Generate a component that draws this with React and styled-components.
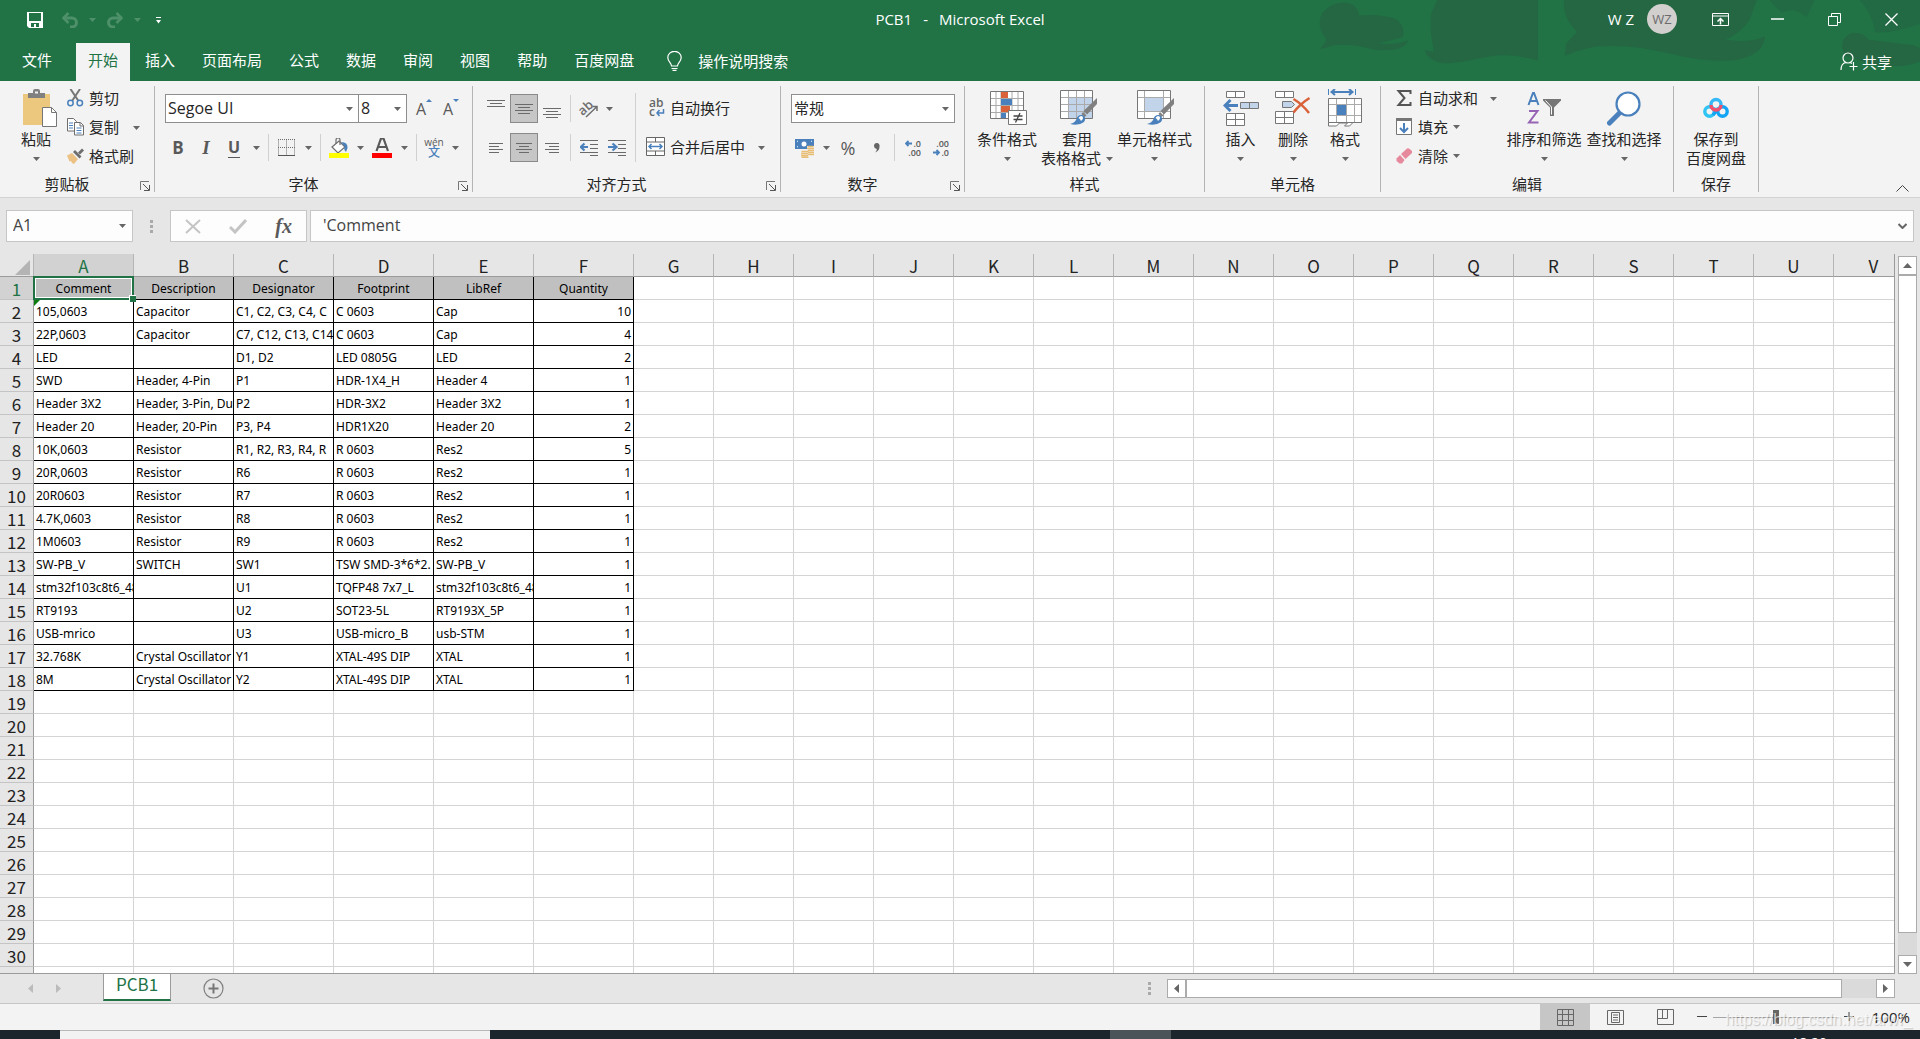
import React from "react";
import styled, { createGlobalStyle, css } from "styled-components";

const GlobalStyle = createGlobalStyle`
  * {
    box-sizing: border-box;
  }

  html,
  body,
  #root {
    height: 100%;
  }

  body {
    margin: 0;
    overflow: hidden;
    font-family: "Open Sans", "Noto Sans CJK SC", sans-serif;
    font-size: 15px;
    color: #262626;
    background: #e6e6e6;
  }

  button,
  input,
  select {
    font: inherit;
    color: inherit;
  }

  button {
    padding: 0;
    border: none;
    background: none;
  }

  svg {
    display: block;
    flex: none;
  }
`;

/* ---------- data ---------- */

const TABS = ["文件", "开始", "插入", "页面布局", "公式", "数据", "审阅", "视图", "帮助", "百度网盘"];

const HEADERS = ["Comment", "Description", "Designator", "Footprint", "LibRef", "Quantity"];

const PARTS = [
  ["105,0603", "Capacitor", "C1, C2, C3, C4, C", "C 0603", "Cap", 10],
  ["22P,0603", "Capacitor", "C7, C12, C13, C14", "C 0603", "Cap", 4],
  ["LED", "", "D1, D2", "LED 0805G", "LED", 2],
  ["SWD", "Header, 4-Pin", "P1", "HDR-1X4_H", "Header 4", 1],
  ["Header 3X2", "Header, 3-Pin, Dual row", "P2", "HDR-3X2", "Header 3X2", 1],
  ["Header 20", "Header, 20-Pin", "P3, P4", "HDR1X20", "Header 20", 2],
  ["10K,0603", "Resistor", "R1, R2, R3, R4, R", "R 0603", "Res2", 5],
  ["20R,0603", "Resistor", "R6", "R 0603", "Res2", 1],
  ["20R0603", "Resistor", "R7", "R 0603", "Res2", 1],
  ["4.7K,0603", "Resistor", "R8", "R 0603", "Res2", 1],
  ["1M0603", "Resistor", "R9", "R 0603", "Res2", 1],
  ["SW-PB_V", "SWITCH", "SW1", "TSW SMD-3*6*2.", "SW-PB_V", 1],
  ["stm32f103c8t6_48", "", "U1", "TQFP48 7x7_L", "stm32f103c8t6_48", 1],
  ["RT9193", "", "U2", "SOT23-5L", "RT9193X_5P", 1],
  ["USB-mrico", "", "U3", "USB-micro_B", "usb-STM", 1],
  ["32.768K", "Crystal Oscillator", "Y1", "XTAL-49S DIP", "XTAL", 1],
  ["8M", "Crystal Oscillator", "Y2", "XTAL-49S DIP", "XTAL", 1],
];

const COLUMNS = "ABCDEFGHIJKLMNOPQRSTUV".split("");
const ROW_COUNT = 31;

/* ---------- icons ---------- */

const Svg = ({ w, h, children }) => (
  <svg width={w} height={h} viewBox={`0 0 ${w} ${h}`} fill="none" aria-hidden="true">
    {children}
  </svg>
);

const Arrow = ({ color = "#666" }) => (
  <Svg w={7} h={4}>
    <path d="M0 0h7L3.5 4z" fill={color} />
  </Svg>
);

const SaveIcon = () => (
  <Svg w={16} h={16}>
    <path d="M0 0h16v16H2l-2-2z" fill="#fff" />
    <path d="M2 1h12v8H2zM4 11h8v4H9v-3H7v3H4z" fill="#217346" />
  </Svg>
);

const UndoIcon = ({ flip }) => (
  <Svg w={18} h={16}>
    <g transform={flip ? "translate(18 0) scale(-1 1)" : undefined} stroke="#4d9069" strokeWidth="3">
      <path d="M2 6h9a4.500 4.500 0 0 1 0 9h-2" />
      <path d="M7.500 1L2.500 6l5 5" strokeWidth="2.500" />
    </g>
  </Svg>
);

const CustomizeIcon = () => (
  <Svg w={5} h={7}>
    <path d="M0 0h5v1H0zM0 3h5L2.500 6.500z" fill="#fff" />
  </Svg>
);

const RibbonModeIcon = () => (
  <Svg w={17} h={13}>
    <path d="M.5.500h16v12H.5zM.5 3h16" stroke="#fff" />
    <path d="M8.500 11.500V5.500M5.500 8.500l3-3 3 3" stroke="#fff" strokeWidth="1.500" />
  </Svg>
);

const BulbIcon = () => (
  <Svg w={15} h={20}>
    <path d="M4.500 15c0-3-3.700-4.500-3.700-8.500a6.500 6 0 0 1 13.400 0c0 4-3.700 5.500-3.700 8.500zM4.500 17.500h6M5.500 19.400h4" stroke="#fff" strokeWidth="1.200" />
  </Svg>
);

const ShareIcon = () => (
  <Svg w={18} h={19}>
    <circle cx="8" cy="6" r="5" stroke="#fff" strokeWidth="1.200" />
    <path d="M1 18c0-4.500 2-7 5-7.500M10 10.500l2 1M13.500 10v8.500M9.500 14.500h8" stroke="#fff" strokeWidth="1.200" />
  </Svg>
);

const PasteIcon = () => (
  <Svg w={43} h={39}>
    <g transform="translate(8 0)">
      <path d="M0 5h27v31H0z" fill="#ecc77e" />
      <path d="M5 4h5V2q0-2 2-2h3q2 0 2 2v2h5v5H5z" fill="#808080" />
      <path d="M12 2.500h3v2h-3z" fill="#f3f3f3" />
      <path d="M19.500 18.500h9l5 5v14h-14z" fill="#fff" stroke="#767676" />
      <path d="M28.500 18.500v5h5" stroke="#767676" />
    </g>
  </Svg>
);

const CutIcon = () => (
  <Svg w={17} h={18}>
    <path d="M3.500 0l8 12M13 0L5 12" stroke="#767676" strokeWidth="2" />
    <circle cx="3.500" cy="14" r="2.700" stroke="#4a80bb" strokeWidth="1.500" />
    <circle cx="12.800" cy="14" r="2.700" stroke="#4a80bb" strokeWidth="1.500" />
  </Svg>
);

const CopyIcon = () => (
  <Svg w={17} h={18}>
    <path d="M.5.500h6l3 3v9.500h-9z" fill="#fff" stroke="#6e6e6e" />
    <path d="M2 5h4M2 7.500h4M2 10h4" stroke="#4a80bb" />
    <path d="M7.500 4.500h6l3 3v9.500h-9z" fill="#fff" stroke="#6e6e6e" />
    <path d="M13 4.500v3.500h3.500" stroke="#6e6e6e" />
    <path d="M9.500 10h5M9.500 12.500h5M9.500 15h5" stroke="#4a80bb" />
  </Svg>
);

const FormatBrushIcon = () => (
  <Svg w={17} h={16}>
    <path d="M0 7.500l5-2.500 6 6-4 5-2-1-1-2-1.500.5z" fill="#ecc184" />
    <path d="M6 4l2-2 6.500 6.500L12.500 10.500z" fill="#6e6e6e" />
    <path d="M11 4.500L15 .5l2 2-4 4z" fill="#6e6e6e" />
  </Svg>
);

const BordersIcon = () => (
  <Svg w={17} h={18}>
    <path d="M.5.500v15M8.500.500v15M16.500.500v15M0 .5h17M0 8.500h17" stroke="#6e6e6e" strokeDasharray="1 1" />
    <path d="M0 16.500h17" stroke="#555" />
  </Svg>
);

const FillIcon = () => (
  <Svg w={20} h={20}>
    <path d="M3 9l7-6 6 6-7 6z" fill="#fff" stroke="#6e6e6e" strokeWidth="1.200" />
    <path d="M7 6V2q0-2 2-2t2 2v5" stroke="#6e6e6e" strokeWidth="1.200" />
    <path d="M12 4q7 0 6.500 6l-1.500 4q-3-3-1-5z" fill="#4a80bb" />
    <path d="M0 15h20v5H0z" fill="#ff0" />
  </Svg>
);

const FontColorIcon = () => (
  <Svg w={20} h={20}>
    <path d="M4.500 13L9 .5h2.500L16 13M6 9h8" stroke="#595959" strokeWidth="2.200" />
    <path d="M0 15h20v5H0z" fill="#f00" />
  </Svg>
);

const BAR_SETS = {
  top: { w: 18, h: 26, y: 4, n: 3, long: 18, short: 12 },
  middle: { w: 18, h: 26, y: 8, n: 4, long: 18, short: 12 },
  bottom: { w: 18, h: 26, y: 12, n: 4, long: 18, short: 12 },
  left: { w: 14, h: 14, y: 2, n: 4, long: 14, short: 10, side: 0 },
  center: { w: 16, h: 14, y: 2, n: 4, long: 16, short: 10 },
  right: { w: 14, h: 14, y: 2, n: 4, long: 14, short: 10, side: 1 },
};

const BarsIcon = ({ kind }) => {
  const { w, h, y, n, long, short, side = 0.5 } = BAR_SETS[kind];
  return (
    <Svg w={w} h={h}>
      {Array.from({ length: n }, (_, i) => {
        const len = i % 2 ? short : long;
        const x = (w - len) * side;
        return <path key={i} d={`M${x} ${y + i * 3 + 0.5}h${len}`} stroke="#6a6a6a" />;
      })}
    </Svg>
  );
};

const OrientationIcon = () => (
  <Svg w={20} h={18}>
    <text x="0" y="13" fontSize="13" fontWeight="600" fill="#6e6e6e" transform="rotate(-42 6 10)">
      ab
    </text>
    <path d="M7 17L17.500 7M13.500 6.500H18V11" stroke="#6e6e6e" strokeWidth="1.500" />
  </Svg>
);

const IndentIcon = ({ right }) => (
  <Svg w={18} h={17}>
    <path d="M0 1.500h18M10 5.500h8M10 9.500h8M0 13.500h18M10 16.500h8" stroke="#6a6a6a" />
    {right ? (
      <path d="M0 8h8M4.500 4.500L8.500 8l-4 3.500" stroke="#4a80bb" strokeWidth="2.200" />
    ) : (
      <path d="M8 8H1M4.500 4.500L.8 8l3.700 3.500" stroke="#4a80bb" strokeWidth="2.200" />
    )}
  </Svg>
);

const WrapIcon = () => (
  <Svg w={19} h={20}>
    <text x="3" y="9" fontSize="12" fontWeight="600" fill="#666">
      ab
    </text>
    <text x="3" y="18" fontSize="12" fontWeight="600" fill="#666">
      c
    </text>
    <path d="M17.500 11v4H11M13.500 12L11 15l2.500 3" stroke="#4a80bb" strokeWidth="1.500" />
  </Svg>
);

const MergeIcon = () => (
  <Svg w={19} h={19}>
    <path d="M.5.500h18v18H.5zM.5 5h18M.5 14h18M9.500.500V5M9.500 14v4.500" fill="#fff" stroke="#666" />
    <path d="M3 9.500h13M5.500 7L3 9.500 5.500 12M13.500 7L16 9.500 13.500 12" stroke="#4a80bb" strokeWidth="1.500" />
  </Svg>
);

const CurrencyIcon = () => (
  <Svg w={19} h={20}>
    <path d="M0 1h19v10H0z" fill="#4a80bb" />
    <circle cx="9" cy="6" r="2.500" fill="#fff" />
    <path d="M2 3l1 .5M2 9l1-.5M16 3l1 .5" stroke="#fff" />
    <path d="M12 8h7v10h-7zM6 12h8v7H6z" fill="#f3f3f3" />
    <path d="M12.500 8.500h6M12 10.500h7M13 12.500h6M13 14.500h6M13 16.500h6M6.500 13.500h7M6 15.500h7M6 17.500h7M6.500 19.300h7" stroke="#e8bd74" strokeWidth="1.500" />
  </Svg>
);

const DecimalIcon = ({ less }) => (
  <Svg w={17} h={18}>
    <g fontSize="9" fontWeight="600" fill="#595959" textAnchor="end">
      <text x="16" y="8">{less ? ".00" : ".0"}</text>
      <text x="16" y="17">{less ? ".0" : ".00"}</text>
    </g>
    {less ? (
      <path d="M0 13.500h6M3.500 11L6 13.500 3.500 16" stroke="#4a80bb" strokeWidth="1.800" />
    ) : (
      <path d="M7 4.500H1M3.500 2L1 4.500 3.500 7" stroke="#4a80bb" strokeWidth="1.800" />
    )}
  </Svg>
);

const ConditionalIcon = () => (
  <Svg w={41} h={35}>
    <g transform="translate(3 0)">
      <path d="M.5.500h33v27H.5z" fill="#fff" stroke="#767676" />
      <path d="M6 1v26M11 1v26M22 1v26M28 1v26M1 7.500h32M1 14.500h32M1 21.500h32" stroke="#aaa" />
      <path d="M11 1h7v6h-7zM11 15h9v6h-9z" fill="#d9623b" />
      <path d="M11 8h11v6H11zM11 22h5v5h-5z" fill="#4a80bb" />
      <path d="M18.500 19.500h18v14h-18z" fill="#fff" stroke="#767676" />
      <path d="M23.500 25h9M23.500 28.500h9M30 22l-4.500 9.500" stroke="#444" strokeWidth="1.300" />
    </g>
  </Svg>
);

const BrushParts = () => (
  <>
    <path d="M37 8v6L27 24.500 23.500 21z" fill="#808080" />
    <path d="M23 22l3.500 3.500-2 1.500-3-3z" fill="#808080" />
    <path d="M10 34q5-1 6.500-5 1-4.500 6-4 4.500 3 1.500 7-5 4-14 2z" fill="#4a80bb" />
    <path d="M18.500 28q2-3 4-1.500 1.500 2-1.500 4.500-.5-2-2.500-3z" fill="#fff" />
  </>
);

const TableFormatIcon = () => (
  <Svg w={41} h={36}>
    <g transform="translate(3 0)">
      <path d="M.5.500h32v28H.5z" fill="#fff" stroke="#767676" />
      <path d="M9 8h23v20H9z" fill="#c1d4ea" />
      <path d="M8.500 1v27M16.500 1v27M24.500 1v27M1 7.500h31M1 14.500h31M1 21.500h31" stroke="#aaa" />
      <BrushParts />
    </g>
  </Svg>
);

const CellStyleIcon = () => (
  <Svg w={41} h={36}>
    <g transform="translate(3 0)">
      <path d="M.5.500h33v28H.5z" fill="#fff" stroke="#767676" />
      <path d="M7.500 1v27M26.500 1v27M1 7.500h32M1 21.500h32" stroke="#aaa" />
      <path d="M8 8h18v13H8z" fill="#c1d4ea" />
      <BrushParts />
    </g>
  </Svg>
);

const InsertIcon = () => (
  <Svg w={36} h={36}>
    <path d="M3.500 1.500h18v6h-18zM12.500 1.500v6M3.500 23.500h18v12h-18zM3.500 29.500h18M12.500 23.500v12" fill="#fff" stroke="#767676" />
    <path d="M17.500 12.500h18v6h-18zM26.500 12.500v6" fill="#c1d4ea" stroke="#767676" />
    <path d="M15 15.500H2M7.500 10l-5.500 5.500L7.500 21" stroke="#4a80bb" strokeWidth="3" />
  </Svg>
);

const DeleteIcon = () => (
  <Svg w={36} h={36}>
    <path d="M.5 1.500h18v6H.5zM9.500 1.500v6M.5 21.500h18v12H.5zM.5 27.500h18M9.500 21.500v12" fill="#fff" stroke="#767676" />
    <path d="M7.500 11.500h9l3 3-3 3h-9z" fill="#c1d4ea" stroke="#767676" />
    <path d="M18.500 9Q27 14 34 23M34.500 8Q25 14 18.500 22.500" stroke="#d9623b" strokeWidth="2.500" />
  </Svg>
);

const FormatIcon = () => (
  <Svg w={35} h={38}>
    <path d="M.5 0v6M27.500 0v6" stroke="#4a80bb" />
    <path d="M4 3h20M7 0L3.500 3 7 6M21 0l3.500 3L21 6" stroke="#4a80bb" strokeWidth="2" />
    <path d="M.5 33v4h8l3-3h8l-3 3h5l4-4" fill="#fff" stroke="#767676" />
    <path d="M.5 9.500h33v24H.5z" fill="#fff" stroke="#767676" />
    <path d="M8.500 10v23M18.500 10v23M26.500 10v23M1 15.500h32M1 26.500h32" stroke="#aaa" />
    <path d="M9 16h9v10H9z" fill="#4a80bb" />
  </Svg>
);

const SumIcon = () => (
  <Svg w={18} h={16}>
    <path d="M15.500 4V1H3.500l6 7-6 7h12v-3" stroke="#555" strokeWidth="2" />
  </Svg>
);

const FillDownIcon = () => (
  <Svg w={18} h={17}>
    <path d="M1.500.500h15v16h-15z" fill="#fff" stroke="#767676" />
    <path d="M1 0h16v3H1z" fill="#767676" />
    <path d="M9 5v9M5 10l4 4 4-4" stroke="#4a80bb" strokeWidth="2" />
  </Svg>
);

const EraserIcon = () => (
  <Svg w={18} h={16}>
    <path d="M6 6l6-5.500q1-.5 2 0L17 3v2l-6.500 6z" fill="#e7899d" />
    <path d="M5 7l4.500 5L7 15.500H4.500L1.500 13v-2.500z" fill="#e7899d" />
  </Svg>
);

const SortFilterIcon = () => (
  <Svg w={34} h={34}>
    <path d="M1.500 14L6 2h1l4.500 12M3 10h7" stroke="#4a80bb" strokeWidth="2" />
    <path d="M2 20h8.500L2 31.500h9.500" stroke="#9664b4" strokeWidth="2" />
    <path d="M16 8h18v1.500l-7 7v8.500h-4v-8.500l-7-7z" fill="#767676" />
    <path d="M18.500 9.500l6 6.500V23.500" stroke="#fff" />
  </Svg>
);

const FindIcon = () => (
  <Svg w={34} h={35}>
    <path d="M2.500 32L13 21.500" stroke="#4a80bb" strokeWidth="5" strokeLinecap="round" />
    <circle cx="21" cy="13" r="11.500" fill="#fff" stroke="#4a80bb" strokeWidth="2.200" />
  </Svg>
);

const NetdiskIcon = () => (
  <Svg w={26} h={22}>
    <circle cx="6.500" cy="14.500" r="4.700" stroke="#2fc4f4" strokeWidth="3.400" />
    <circle cx="19.500" cy="14.500" r="4.700" stroke="#12a4f5" strokeWidth="3.400" />
    <path d="M10 18l6-7" stroke="#12a4f5" strokeWidth="3.400" />
    <circle cx="13" cy="7.500" r="5" stroke="#35b8f6" strokeWidth="3.400" />
    <path d="M8 8a5 5 0 0 0 10 0" stroke="#f3506e" strokeWidth="3.400" />
  </Svg>
);

const LauncherIcon = () => (
  <Svg w={10} h={10}>
    <path d="M.5 9V.5H9" stroke="#777" />
    <path d="M3 3l6 6M9.500 4v5.500H4" stroke="#555" />
  </Svg>
);

const CancelIcon = () => (
  <Svg w={16} h={15}>
    <path d="M1 1l14 13M15 1L1 14" stroke="#c4c4c4" strokeWidth="2" />
  </Svg>
);

const AcceptIcon = () => (
  <Svg w={18} h={15}>
    <path d="M1 8l5 5L17 1" stroke="#c4c4c4" strokeWidth="3" />
  </Svg>
);

const GripDots = () => (
  <Svg w={3} h={13}>
    <path d="M0 0h3v3H0zM0 5h3v3H0zM0 10h3v3H0z" fill="#aaa" />
  </Svg>
);

const TRIANGLES = {
  left: [5, 9, "M5 0v9L0 4.500z"],
  right: [5, 9, "M0 0v9l5-4.500z"],
  up: [9, 5, "M0 5h9L4.500 0z"],
  down: [9, 5, "M0 0h9L4.500 5z"],
};

const Triangle = ({ dir, color = "#666" }) => {
  const [w, h, d] = TRIANGLES[dir];
  return (
    <Svg w={w} h={h}>
      <path d={d} fill={color} />
    </Svg>
  );
};

const AddSheetIcon = () => (
  <Svg w={21} h={21}>
    <circle cx="10.500" cy="10.500" r="9.500" stroke="#808080" strokeWidth="1.200" />
    <path d="M10.500 5.500v10M5.500 10.500h10" stroke="#777" strokeWidth="2" />
  </Svg>
);

const NormalViewIcon = () => (
  <Svg w={17} h={17}>
    <path d="M.5.500h16v16H.5zM5.500.500v16M11.500.500v16M.5 5.500h16M.5 11.500h16" stroke="#666" />
  </Svg>
);

const PageLayoutIcon = () => (
  <Svg w={17} h={15}>
    <path d="M.5.500h16v14H.5zM4.500 2.500h8v10h-8zM6 5h5M6 7.500h5M6 10h5" stroke="#666" />
  </Svg>
);

const PageBreakIcon = () => (
  <Svg w={17} h={16}>
    <path d="M.5.500h16v15H.5zM.5 9.500h10M5.500.500v9M10.500.500v9" stroke="#666" />
  </Svg>
);

const Doodle = () => (
  <svg width="640" height="81" viewBox="0 0 1568 240" preserveAspectRatio="none" aria-hidden="true">
    <g fill="#246742">
      <path d="M98 146q10-15 16-30Q86 78 104 38 128 4 164 8q28 6 30 38 60-6 92 12 24 26 14 52l-30 10-28 8q40 6 72-8-10 34-80 28-60-20-102-14z" />
      <path d="M385 0H632V180Q560 154 500 170T400 188Q360 178 355 148l22 6Q366 90 370 40z" />
      <path d="M696 0H1168L1150 60Q1130 96 1092 118 1150 128 1188 108 1186 160 1120 178 1040 186 960 160 860 130 776 138 730 148 698 166L700 130 728 94Q690 50 696 0z" />
      <path d="M1385 165Q1364 120 1400 98q26-6 42 20l110 16 16 8v40q-50 24-120 8z" />
    </g>
    <path d="M1200 0h110q-16 40-20 52-30-34-60-14-20-20-30-38zM1420 0h148v70q-70 30-110 26-8-60-38-96z" fill="#226a43" />
  </svg>
);

/* ---------- title bar and tabs ---------- */

const Window = styled.div`
  height: 100vh;
  display: flex;
  flex-direction: column;
  overflow: hidden;
`;

const Top = styled.header`
  position: relative;
  background: #217346;
  color: #fff;
`;

const Backdrop = styled.div`
  position: absolute;
  top: 0;
  right: 0;
`;

const TitleBar = styled.div`
  position: relative;
  display: grid;
  grid-template-columns: 1fr auto 1fr;
  align-items: center;
  height: 38px;
`;

const QuickAccess = styled.div`
  display: flex;
  align-items: center;
  padding: 2px 0 0 22px;
`;

const QuickButton = styled.button`
  display: flex;
  align-items: center;
  justify-content: center;
  width: ${(p) => p.$w}px;
  height: 26px;
`;

const Title = styled.h1`
  display: flex;
  gap: 11px;
  margin: 0;
  font-size: 15px;
  font-weight: 400;
  line-height: 20px;
`;

const Account = styled.div`
  display: flex;
  align-items: center;
  justify-content: flex-end;
  font-size: 15px;
`;

const Avatar = styled.span`
  display: flex;
  align-items: center;
  justify-content: center;
  width: 30px;
  height: 30px;
  margin: 0 15px 0 13px;
  border-radius: 50%;
  background: #d2d0ce;
  color: #6b6b6b;
  font-size: 13px;
`;

const WindowButton = styled.button`
  display: flex;
  align-items: center;
  justify-content: center;
  width: 57px;
  height: 38px;
`;

const TabBar = styled.nav`
  position: relative;
  display: flex;
  align-items: stretch;
  gap: 3px;
  height: 43px;
  padding: 5px 20px 0 10px;
`;

const Tab = styled.button`
  padding: 0 12px 5px;
  color: ${(p) => (p.$active ? "#217346" : "#fff")};
  background: ${(p) => (p.$active ? "#f3f3f3" : "transparent")};

  &:first-child {
    margin-right: 9px;
  }
`;

const TellMe = styled.label`
  display: flex;
  align-items: center;
  flex: 1;
  gap: 16px;
  margin-left: 18px;
  padding-bottom: 2px;

  input {
    width: 160px;
    padding: 0;
    border: none;
    background: none;
  }

  input::placeholder {
    color: #fff;
  }
`;

const Share = styled.button`
  display: flex;
  align-items: center;
  gap: 4px;
  padding: 0 8px 2px 0;
  color: #fff;
`;

/* ---------- ribbon ---------- */

const Ribbon = styled.section`
  display: flex;
  flex: none;
  padding: 5px 0;
  background: #f3f3f3;
  border-bottom: 1px solid #d2d2d2;
`;

const Group = styled.div`
  display: flex;
  flex-direction: column;
  flex: none;
  width: ${(p) => p.$w}px;
  height: 106px;
  border-right: 1px solid #b4b4b4;
`;

const GroupBody = styled.div`
  display: flex;
  flex: 1;
  padding: 0 9px;
`;

const Caption = styled.div`
  display: flex;
  align-items: center;
  height: 16px;
  line-height: 16px;

  span {
    flex: 1;
    text-align: center;
  }

  button {
    width: 20px;
    padding: 4px 4px 0 6px;
  }
`;

const Rows = styled.div`
  display: flex;
  flex-direction: column;
  gap: 10px;
  padding-top: 8px;
`;

const Row = styled.div`
  display: flex;
  align-items: center;
  height: 29px;
`;

const Stack = styled.div`
  display: flex;
  flex-direction: column;
  flex: 1;
  min-width: 0;
  margin-top: -2px;
`;

const Tool = styled.button`
  display: flex;
  align-items: center;
  justify-content: center;
  flex: none;
  width: ${(p) => p.$w || 28}px;
  height: 29px;
  color: #595959;
  ${(p) =>
    p.$pressed &&
    css`
      background: #c6c6c6;
      border: 1px solid #8a8a8a;
    `}
`;

const Glyph = styled.span`
  font-size: ${(p) => p.$size || 17}px;
  font-weight: ${(p) => (p.$light ? 400 : 700)};
  font-style: ${(p) => (p.$italic ? "italic" : "normal")};
  font-family: ${(p) => (p.$serif ? '"Liberation Serif", serif' : "inherit")};
  line-height: 20px;
  color: #595959;
  border-bottom: ${(p) => (p.$under ? "1px solid #595959" : "none")};
`;

const FontStep = styled.span`
  display: flex;
  align-items: flex-start;
  font-size: 16px;
  line-height: 20px;
`;

const Pinyin = styled.span`
  display: flex;
  flex-direction: column;
  align-items: center;
  font-size: 10px;
  line-height: 10px;

  b {
    color: #4a80bb;
    font-size: 12px;
    font-weight: 500;
    line-height: 12px;
  }
`;

const Divider = styled.span`
  flex: none;
  width: 1px;
  height: ${(p) => p.$h || 27}px;
  margin: ${(p) => p.$top || 0}px 4px 0;
  background: #d0d0d0;
`;

const TextTool = styled.button`
  display: flex;
  align-items: center;
  flex: none;
  gap: 5px;
  height: 29px;
  padding: 0 0 2px ${(p) => p.$pad || 5}px;
  white-space: nowrap;
`;

const BigTool = styled.button`
  display: flex;
  flex-direction: column;
  align-items: center;
  flex: none;
  width: ${(p) => p.$w}px;
  line-height: 19px;
  white-space: nowrap;
`;

const BigIcon = styled.span`
  display: flex;
  align-items: center;
  justify-content: center;
  height: 44px;
`;

const BigLine = styled.span`
  display: flex;
  align-items: center;
  justify-content: center;
  gap: 5px;
  height: 19px;
`;

const ComboBox = styled.span`
  position: relative;
  flex: none;
  width: ${(p) => p.$w}px;
  height: 29px;
  margin-left: ${(p) => (p.$joined ? -1 : 1)}px;

  select {
    width: 100%;
    height: 100%;
    padding: 0 2px 2px;
    appearance: none;
    background: #fff;
    border: 1px solid #8e8e8e;
    border-radius: 0;
    font-size: ${(p) => p.$size || 15}px;
  }

  svg {
    position: absolute;
    top: 13px;
    right: 6px;
    pointer-events: none;
  }
`;

const Collapse = styled.button`
  align-self: flex-end;
  margin-left: auto;
  padding: 0 11px 0 0;
`;

const Combo = ({ label, value, w, size, joined }) => (
  <ComboBox $w={w} $size={size} $joined={joined}>
    <select aria-label={label} defaultValue={value}>
      <option>{value}</option>
    </select>
    <Arrow />
  </ComboBox>
);

const Caret = ({ w = 16, label }) => (
  <Tool $w={w} aria-label={label}>
    <Arrow />
  </Tool>
);

const RibbonGroup = ({ title, w, launcher, children }) => (
  <Group $w={w}>
    <GroupBody>{children}</GroupBody>
    <Caption>
      <span>{title}</span>
      {launcher && (
        <button aria-label={`${title}设置`}>
          <LauncherIcon />
        </button>
      )}
    </Caption>
  </Group>
);

const BigButton = ({ w, icon, label, second, plain }) => (
  <BigTool $w={w}>
    <BigIcon>{icon}</BigIcon>
    <BigLine>{label}</BigLine>
    <BigLine>
      {second}
      {!plain && <Arrow />}
    </BigLine>
  </BigTool>
);

/* ---------- formula bar ---------- */

const FormulaBar = styled.div`
  display: flex;
  align-items: center;
  flex: none;
  height: 56px;
  padding: 0 6px;
`;

const Field = styled.div`
  display: flex;
  align-items: center;
  flex: ${(p) => (p.$grow ? "1" : "none")};
  width: ${(p) => (p.$w ? `${p.$w}px` : "auto")};
  height: 32px;
  padding-right: 6px;
  background: #fdfdfd;
  border: 1px solid #c6c6c6;
  color: #444;

  input {
    flex: 1;
    min-width: 0;
    padding: 0 0 2px ${(p) => (p.$grow ? 12 : 6)}px;
    border: none;
    background: none;
    outline: none;
    font-family: "Open Sans", sans-serif;
    font-size: 16px;
  }
`;

const Grip = styled.span`
  padding: 0 17px;
`;

const FormulaTools = styled.div`
  display: flex;
  align-items: center;
  justify-content: space-around;
  width: 137px;
  height: 32px;
  margin-right: 3px;
  background: #fdfdfd;
  border: 1px solid #c6c6c6;
`;

/* ---------- sheet ---------- */

const SheetArea = styled.main`
  display: flex;
  flex: 1;
  min-height: 0;
  padding-right: 3px;
`;

const Grid = styled.div`
  flex: 1;
  overflow: hidden;
  border-right: 1px solid #9b9b9b;
  border-bottom: 1px solid #9b9b9b;
`;

const Table = styled.table`
  width: 1914px;
  table-layout: fixed;
  border-collapse: separate;
  border-spacing: 0;
  background: #fff;
`;

const Col = styled.col`
  width: ${(p) => p.$w}px;
`;

const HeadCell = styled.th`
  height: 23px;
  padding: 2px 0 0;
  border-right: 1px solid #b5b5b5;
  border-bottom: 1px solid ${(p) => (p.$selected ? "#217346" : "#9b9b9b")};
  background: ${(p) => (p.$selected ? "#d2d2d2" : "#e6e6e6")};
  color: ${(p) => (p.$selected ? "#217346" : "#222")};
  font-family: "Noto Sans CJK SC", sans-serif;
  font-size: 17px;
  font-weight: 400;
  line-height: 20px;
`;

const RowHead = styled(HeadCell)`
  border-right-color: #9b9b9b;
  border-bottom-color: #c4c4c4;
`;

const Corner = styled(HeadCell)`
  svg {
    margin: 2px 3px 0 auto;
  }
`;

const Cell = styled.td`
  position: relative;
  height: 23px;
  padding: 2px 2px 0;
  overflow: ${(p) => (p.$selected ? "visible" : "hidden")};
  border-right: 1px solid ${(p) => (p.$filled ? "#000" : "#d4d4d4")};
  border-bottom: 1px solid ${(p) => (p.$filled ? "#000" : "#d4d4d4")};
  background: ${(p) => (p.$title ? "#c0c0c0" : "#fff")};
  color: #000;
  font-family: "Noto Sans", sans-serif;
  font-size: 12px;
  line-height: 20px;
  text-align: ${(p) => p.$align || "left"};
  white-space: nowrap;
`;

const Selection = styled.span`
  position: absolute;
  inset: -1px;
  border: 2px solid #217346;
  box-shadow: inset 0 0 0 1px #fff;
  z-index: 1;

  &::after {
    content: "";
    position: absolute;
    right: -4px;
    bottom: -4px;
    width: 6px;
    height: 6px;
    background: #217346;
    border-top: 1px solid #fff;
    border-left: 1px solid #fff;
  }
`;

const ErrorFlag = styled.span`
  position: absolute;
  top: 0;
  left: 0;
  border-top: 6px solid #107c10;
  border-right: 6px solid transparent;
`;

const VScroll = styled.div`
  display: flex;
  flex-direction: column;
  width: 19px;
  margin: 2px 0 0 3px;
  background: #dadada;
`;

const HScroll = styled.div`
  display: flex;
  width: 728px;
  height: 19px;
  background: #dadada;
`;

const ScrollButton = styled.button`
  display: flex;
  align-items: center;
  justify-content: center;
  flex: none;
  width: 19px;
  height: 19px;
  background: #fff;
  border: 1px solid #ababab;
`;

const Thumb = styled.div`
  flex: ${(p) => p.$size};
  background: #fff;
  border: 1px solid #ababab;
`;

const Gap = styled.div`
  flex: ${(p) => p.$size};
`;

const SheetBar = styled.footer`
  display: flex;
  flex: none;
  height: 30px;
  padding: 0 25px 0 28px;
  border-bottom: 1px solid #c6c6c6;
`;

const SheetNav = styled.div`
  display: flex;
  align-items: center;
  gap: 23px;
  width: 75px;
`;

const SheetTab = styled.button`
  width: 68px;
  height: 27px;
  padding-bottom: 6px;
  background: #fff;
  border: 1px solid #9b9b9b;
  border-width: 0 1px 2px;
  border-bottom-color: #217346;
  color: #217346;
  font-family: "Noto Sans CJK SC", sans-serif;
  font-size: 17px;
  line-height: 20px;
`;

const AddSheet = styled.button`
  margin-left: 32px;
`;

const SheetScroll = styled.div`
  display: flex;
  align-items: center;
  gap: 16px;
  margin-left: auto;
`;

const StatusBar = styled.div`
  position: relative;
  display: flex;
  align-items: center;
  justify-content: flex-end;
  flex: none;
  height: 26px;
  padding-right: 10px;
  background: #f3f3f3;
`;

const ViewButton = styled.button`
  display: flex;
  align-items: center;
  justify-content: center;
  width: 50px;
  height: 26px;
  background: ${(p) => (p.$active ? "#c6c6c6" : "transparent")};
`;

const ZoomButton = styled.button`
  width: 10px;
  margin: ${(p) => (p.$out ? "0 6px 0 7px" : "0 0 0 7px")};
`;

const ZoomSlider = styled.input`
  width: 124px;
  height: 14px;
  margin: 0;
  appearance: none;
  background: linear-gradient(#a6a6a6, #a6a6a6) center / 100% 1px no-repeat;

  &::-webkit-slider-thumb {
    appearance: none;
    width: 6px;
    height: 14px;
    background: #666;
  }
`;

const ZoomValue = styled.button`
  width: 48px;
  margin-left: 8px;
  text-align: right;
`;

const Watermark = styled.span`
  position: absolute;
  right: 8px;
  bottom: 0;
  color: rgba(255, 255, 255, 0.7);
  font-family: "Liberation Sans", sans-serif;
  font-size: 16px;
  line-height: 20px;
  text-shadow: 1px 1px 1px rgba(0, 0, 0, 0.2);
  pointer-events: none;
`;

const Taskbar = styled.div`
  display: flex;
  flex: none;
  height: 9px;
  overflow: hidden;
  background: #1b252b;
  color: #fff;
`;

const TaskSearch = styled.div`
  width: 430px;
  margin-left: 60px;
  background: #f2f2f2;
  border-top: 1px solid #b8b8b8;
`;

const TaskItem = styled.div`
  width: 61px;
  margin-left: 620px;
  background: #4a5459;
`;

const Clock = styled.time`
  margin-left: auto;
  padding: 3px 93px 0 0;
  font-size: 14px;
  line-height: 20px;
`;

const Sheet = () => (
  <Grid>
    <Table>
      <colgroup>
        <Col $w={34} />
        {COLUMNS.map((c, i) => (
          <Col key={c} $w={i < 6 ? 100 : 80} />
        ))}
      </colgroup>
      <thead>
        <tr>
          <Corner aria-label="全选">
            <Svg w={15} h={15}>
              <path d="M15 0v15H0z" fill="#b4b4b4" />
            </Svg>
          </Corner>
          {COLUMNS.map((c, i) => (
            <HeadCell key={c} scope="col" $selected={i === 0}>
              {c}
            </HeadCell>
          ))}
        </tr>
      </thead>
      <tbody>
        {Array.from({ length: ROW_COUNT }, (_, r) => {
          const values = r === 0 ? HEADERS : PARTS[r - 1] || [];
          return (
            <tr key={r}>
              <RowHead scope="row" $selected={r === 0}>
                {r + 1}
              </RowHead>
              {COLUMNS.map((c, i) => (
                <Cell
                  key={c}
                  $filled={i < values.length}
                  $title={r === 0 && i < values.length}
                  $selected={r === 0 && i === 0}
                  $align={r === 0 ? "center" : i === 5 ? "right" : "left"}
                >
                  {values[i]}
                  {r === 0 && i === 0 && <Selection />}
                  {r === 1 && i === 0 && <ErrorFlag />}
                </Cell>
              ))}
            </tr>
          );
        })}
      </tbody>
    </Table>
  </Grid>
);

const App = () => {
  return (
    <Window>
      <GlobalStyle />
      <Top>
        <Backdrop>
          <Doodle />
        </Backdrop>
        <TitleBar>
          <QuickAccess>
            <QuickButton $w={26} aria-label="保存"><SaveIcon /></QuickButton>
            <QuickButton $w={44} aria-label="撤消"><UndoIcon /></QuickButton>
            <QuickButton $w={1} aria-label="撤消列表"><Arrow color="#4d9069" /></QuickButton>
            <QuickButton $w={44} aria-label="恢复"><UndoIcon flip /></QuickButton>
            <QuickButton $w={1} aria-label="恢复列表"><Arrow color="#4d9069" /></QuickButton>
            <QuickButton $w={40} aria-label="自定义快速访问工具栏"><CustomizeIcon /></QuickButton>
          </QuickAccess>
          <Title>
            <span>PCB1</span>
            <span>-</span>
            <span>Microsoft Excel</span>
          </Title>
          <Account>
            W Z
            <Avatar>WZ</Avatar>
            <WindowButton aria-label="功能区显示选项"><RibbonModeIcon /></WindowButton>
            <WindowButton aria-label="最小化">
              <Svg w={13} h={2}><path d="M0 1h13" stroke="#fff" strokeWidth="1.500" /></Svg>
            </WindowButton>
            <WindowButton aria-label="还原">
              <Svg w={13} h={13}><path d="M.5 3.500h9v9h-9zM3.500 3V.5h9v9H10" stroke="#fff" /></Svg>
            </WindowButton>
            <WindowButton aria-label="关闭">
              <Svg w={13} h={13}><path d="M.5.500l12 12M12.500.500l-12 12" stroke="#fff" strokeWidth="1.300" /></Svg>
            </WindowButton>
          </Account>
        </TitleBar>
        <TabBar>
          {TABS.map((t) => (
            <Tab key={t} $active={t === "开始"}>{t}</Tab>
          ))}
          <TellMe>
            <BulbIcon />
            <input aria-label="操作说明搜索" placeholder="操作说明搜索" />
          </TellMe>
          <Share>
            <ShareIcon />
            共享
          </Share>
        </TabBar>
      </Top>

      <Ribbon>
        <RibbonGroup title="剪贴板" w={155} launcher>
          <BigButton w={54} icon={<PasteIcon />} label="粘贴" />
          <Stack>
            <TextTool $pad={4}><CutIcon /> 剪切</TextTool>
            <Row>
              <TextTool $pad={4}><CopyIcon /> 复制</TextTool>
              <Caret w={34} label="复制选项" />
            </Row>
            <TextTool $pad={4}><FormatBrushIcon /> 格式刷</TextTool>
          </Stack>
        </RibbonGroup>

        <RibbonGroup title="字体" w={318} launcher>
          <Rows>
            <Row>
              <Combo label="字体" value="Segoe UI" w={194} size={16} />
              <Combo label="字号" value="8" w={49} size={16} joined />
              <Tool $w={34} aria-label="增大字号">
                <FontStep>A<Svg w={6} h={3}><path d="M0 3h6L3 0z" fill="#4a80bb" /></Svg></FontStep>
              </Tool>
              <Tool $w={20} aria-label="减小字号">
                <FontStep>A<Svg w={6} h={3}><path d="M0 0h6L3 3z" fill="#4a80bb" /></Svg></FontStep>
              </Tool>
            </Row>
            <Row>
              <Tool aria-label="加粗"><Glyph>B</Glyph></Tool>
              <Tool aria-label="倾斜"><Glyph $italic $serif $size={19}>I</Glyph></Tool>
              <Tool aria-label="下划线"><Glyph $under $size={16}>U</Glyph></Tool>
              <Caret label="下划线选项" />
              <Divider />
              <Tool $w={27} aria-label="边框"><BordersIcon /></Tool>
              <Caret label="边框选项" />
              <Divider />
              <Tool $w={27} aria-label="填充颜色"><FillIcon /></Tool>
              <Caret label="填充颜色选项" />
              <Tool aria-label="字体颜色"><FontColorIcon /></Tool>
              <Caret label="字体颜色选项" />
              <Divider />
              <Tool $w={26} aria-label="拼音"><Pinyin>wén<b>文</b></Pinyin></Tool>
              <Caret label="拼音选项" />
            </Row>
          </Rows>
        </RibbonGroup>

        <RibbonGroup title="对齐方式" w={308} launcher>
          <Rows>
            <Row>
              <Tool aria-label="顶端对齐"><BarsIcon kind="top" /></Tool>
              <Tool $pressed aria-label="垂直居中"><BarsIcon kind="middle" /></Tool>
              <Tool aria-label="底端对齐"><BarsIcon kind="bottom" /></Tool>
              <Divider />
              <Tool aria-label="方向"><OrientationIcon /></Tool>
              <Caret w={12} label="方向选项" />
            </Row>
            <Row>
              <Tool aria-label="左对齐"><BarsIcon kind="left" /></Tool>
              <Tool $pressed aria-label="居中"><BarsIcon kind="center" /></Tool>
              <Tool aria-label="右对齐"><BarsIcon kind="right" /></Tool>
              <Divider />
              <Tool aria-label="减少缩进量"><IndentIcon /></Tool>
              <Tool aria-label="增加缩进量"><IndentIcon right /></Tool>
            </Row>
          </Rows>
          <Divider $h={69} $top={7} />
          <Rows>
            <Row><TextTool $pad={6}><WrapIcon /> 自动换行</TextTool></Row>
            <Row>
              <TextTool $pad={6}><MergeIcon /> 合并后居中</TextTool>
              <Caret w={32} label="合并选项" />
            </Row>
          </Rows>
        </RibbonGroup>

        <RibbonGroup title="数字" w={184} launcher>
          <Rows>
            <Row><Combo label="数字格式" value="常规" w={164} /></Row>
            <Row>
              <Tool $w={28} aria-label="会计数字格式"><CurrencyIcon /></Tool>
              <Caret label="会计数字格式选项" />
              <Tool $w={28} aria-label="百分比样式"><Glyph $light $size={18}>%</Glyph></Tool>
              <Tool aria-label="千位分隔样式">
                <Svg w={7} h={10}><path d="M1 3a2.800 2.800 0 1 1 5.500.5Q6.500 8 2 9.500 4 7.500 3.700 6 1 5.500 1 3z" fill="#666" /></Svg>
              </Tool>
              <Divider />
              <Tool aria-label="增加小数位数"><DecimalIcon /></Tool>
              <Tool aria-label="减少小数位数"><DecimalIcon less /></Tool>
            </Row>
          </Rows>
        </RibbonGroup>

        <RibbonGroup title="样式" w={240}>
          <BigButton w={66} icon={<ConditionalIcon />} label="条件格式" />
          <BigButton w={74} icon={<TableFormatIcon />} label="套用" second="表格格式" />
          <BigButton w={81} icon={<CellStyleIcon />} label="单元格样式" />
        </RibbonGroup>

        <RibbonGroup title="单元格" w={176}>
          <BigButton w={53} icon={<InsertIcon />} label="插入" />
          <BigButton w={52} icon={<DeleteIcon />} label="删除" />
          <BigButton w={52} icon={<FormatIcon />} label="格式" />
        </RibbonGroup>

        <RibbonGroup title="编辑" w={293}>
          <Stack>
            <Row>
              <TextTool><SumIcon /> 自动求和</TextTool>
              <Caret w={30} label="求和选项" />
            </Row>
            <TextTool><FillDownIcon /> 填充 <Arrow /></TextTool>
            <TextTool><EraserIcon /> 清除 <Arrow /></TextTool>
          </Stack>
          <BigButton w={80} icon={<SortFilterIcon />} label="排序和筛选" />
          <BigButton w={80} icon={<FindIcon />} label="查找和选择" />
        </RibbonGroup>

        <RibbonGroup title="保存" w={85}>
          <BigButton w={66} icon={<NetdiskIcon />} label="保存到" second="百度网盘" plain />
        </RibbonGroup>

        <Collapse aria-label="折叠功能区">
          <Svg w={13} h={7}><path d="M.5 6.500l6-6 6 6" stroke="#444" /></Svg>
        </Collapse>
      </Ribbon>

      <FormulaBar>
        <Field $w={127}>
          <input aria-label="名称框" defaultValue="A1" />
          <button aria-label="名称列表"><Arrow /></button>
        </Field>
        <Grip><GripDots /></Grip>
        <FormulaTools>
          <button aria-label="取消"><CancelIcon /></button>
          <button aria-label="输入"><AcceptIcon /></button>
          <button aria-label="插入函数"><Glyph $italic $serif $size={20}>fx</Glyph></button>
        </FormulaTools>
        <Field $grow>
          <input aria-label="编辑栏" defaultValue="'Comment" />
          <button aria-label="展开编辑栏">
            <Svg w={9} h={6}><path d="M.5 1l4 4 4-4" stroke="#666" strokeWidth="2" /></Svg>
          </button>
        </Field>
      </FormulaBar>

      <SheetArea>
        <Sheet />
        <VScroll>
          <ScrollButton aria-label="向上滚动"><Triangle dir="up" /></ScrollButton>
          <Thumb $size={658} />
          <Gap $size={22} />
          <ScrollButton aria-label="向下滚动"><Triangle dir="down" /></ScrollButton>
        </VScroll>
      </SheetArea>

      <SheetBar>
        <SheetNav>
          <button aria-label="上一个工作表"><Triangle dir="left" color="#bbb" /></button>
          <button aria-label="下一个工作表"><Triangle dir="right" color="#bbb" /></button>
        </SheetNav>
        <SheetTab>PCB1</SheetTab>
        <AddSheet aria-label="新工作表"><AddSheetIcon /></AddSheet>
        <SheetScroll>
          <GripDots />
          <HScroll>
            <ScrollButton aria-label="向左滚动"><Triangle dir="left" /></ScrollButton>
            <Thumb $size={656} />
            <Gap $size={34} />
            <ScrollButton aria-label="向右滚动"><Triangle dir="right" /></ScrollButton>
          </HScroll>
        </SheetScroll>
      </SheetBar>

      <StatusBar>
        <ViewButton $active aria-label="普通"><NormalViewIcon /></ViewButton>
        <ViewButton aria-label="页面布局"><PageLayoutIcon /></ViewButton>
        <ViewButton aria-label="分页预览"><PageBreakIcon /></ViewButton>
        <ZoomButton $out aria-label="缩小">
          <Svg w={10} h={10}><path d="M0 4.500h10" stroke="#444" /></Svg>
        </ZoomButton>
        <ZoomSlider type="range" min="0" max="100" defaultValue="51" aria-label="缩放" />
        <ZoomButton aria-label="放大">
          <Svg w={10} h={10}><path d="M0 4.500h10M5 0v9" stroke="#444" /></Svg>
        </ZoomButton>
        <ZoomValue>100%</ZoomValue>
        <Watermark>https://blog.csdn.net/arwf_</Watermark>
      </StatusBar>

      <Taskbar>
        <TaskSearch />
        <TaskItem />
        <Clock>18:20</Clock>
      </Taskbar>
    </Window>
  );
};

export default App;
